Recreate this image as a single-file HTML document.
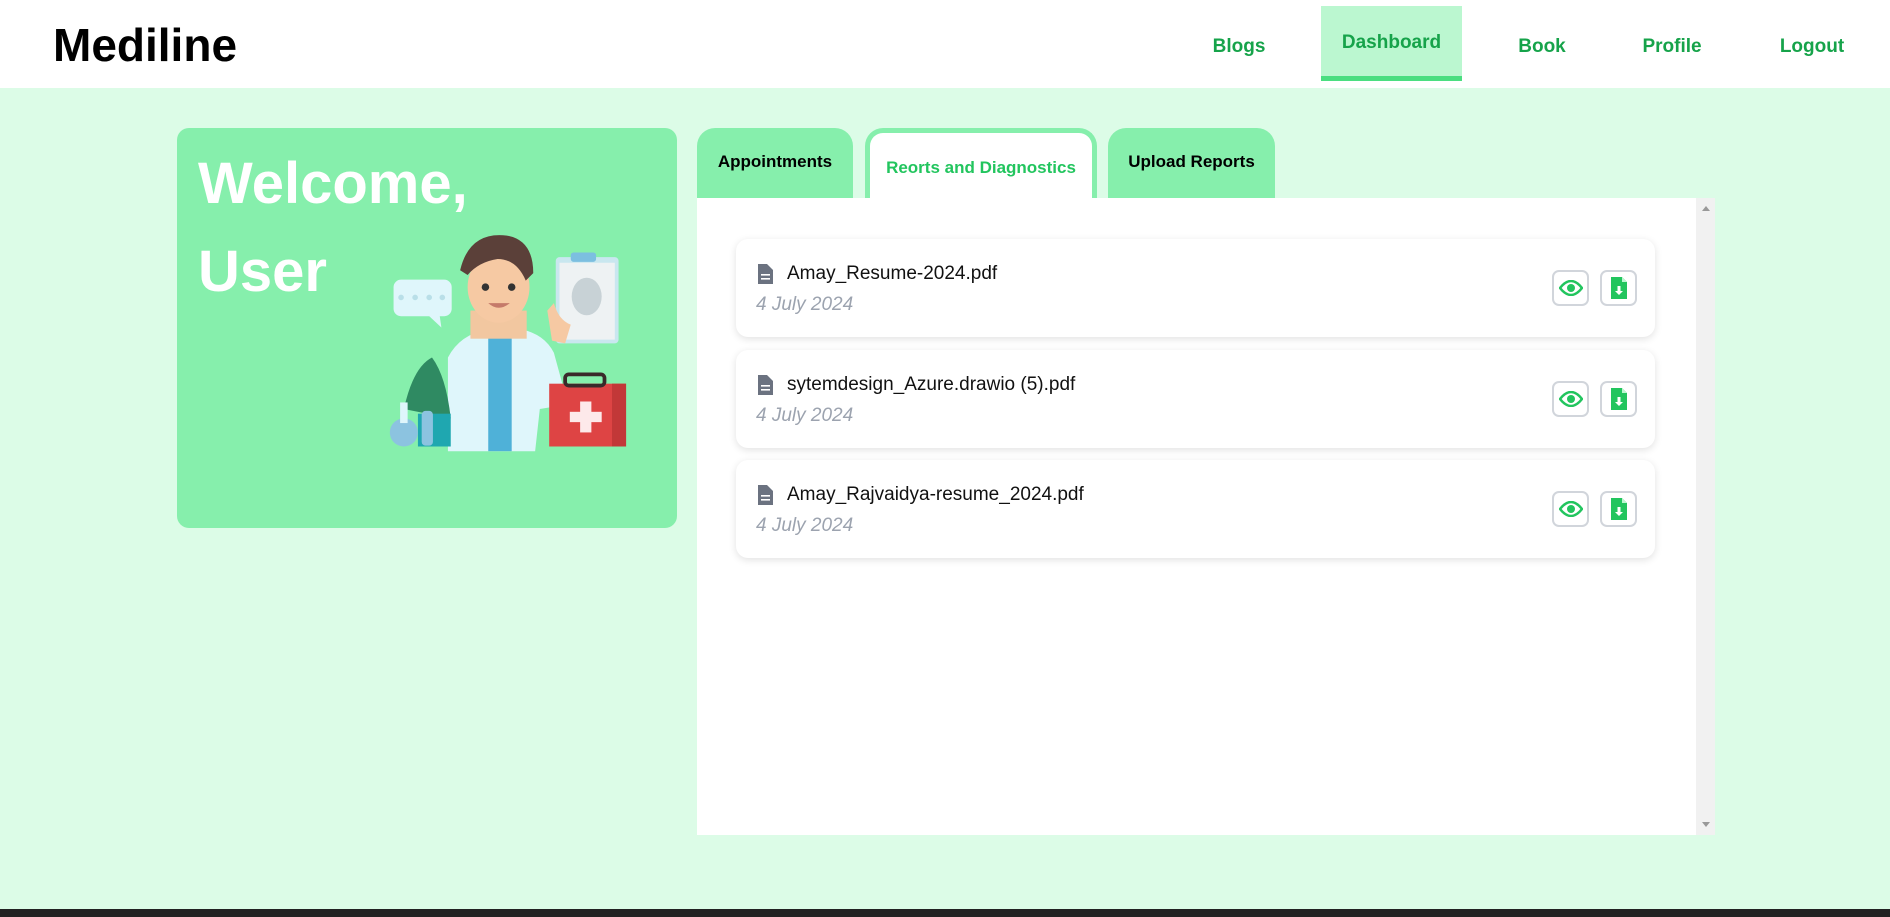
<!DOCTYPE html>
<html><head><meta charset="utf-8"><style>
*{box-sizing:border-box;margin:0;padding:0}
body{width:1890px;height:917px;overflow:hidden;background:#dcfce7;font-family:"Liberation Sans",sans-serif;position:relative}
.nav{position:absolute;left:0;top:0;width:1890px;height:88px;background:#fff}
.logo{position:absolute;left:53px;top:18px;font-size:46px;font-weight:bold;color:#000}
.ni{position:absolute;top:3px;height:88px;line-height:88px;font-size:19px;font-weight:bold;color:#16a34a;transform:translateX(-50%)}
.dash{position:absolute;left:1321px;top:6px;width:141px;height:75px;background:#bbf7d0;border-bottom:5px solid #4ade80;color:#16a34a;font-weight:bold;font-size:19px;text-align:center;line-height:74px}
.welcome{position:absolute;left:177px;top:128px;width:500px;height:400px;background:#86efac;border-radius:12px;overflow:hidden}
.welcome h1{position:absolute;left:21px;color:#fff;font-size:58px;font-weight:bold}
.tab{position:absolute;top:128px;height:70px;background:#86efac;border-radius:18px 18px 0 0;font-size:17px;font-weight:bold;color:#000;text-align:center;line-height:68px}
.panel{position:absolute;left:697px;top:198px;width:1018px;height:637px;background:#fff}
.sb{position:absolute;right:0;top:0;width:19px;height:637px;background:#f1f1f1}
.card{position:absolute;left:39px;width:919px;height:98px;background:#fff;border-radius:12px;box-shadow:0 2px 8px rgba(0,0,0,.12)}
.ttl{position:absolute;left:51px;top:24px;font-size:19px;color:#111}
.dt{position:absolute;left:20px;top:55px;font-size:19px;color:#9ca3af;font-style:italic}
.fi{position:absolute;left:22px;top:25px}
.btn{position:absolute;top:31px;width:37px;height:36px;border:2px solid #d1d5db;border-radius:7px;display:flex;align-items:center;justify-content:center}
</style></head><body>
<div class="nav">
<div class="logo">Mediline</div>
<div class="ni" style="left:1239px">Blogs</div>
<div class="dash">Dashboard</div>
<div class="ni" style="left:1542px">Book</div>
<div class="ni" style="left:1672px">Profile</div>
<div class="ni" style="left:1812px">Logout</div>
</div>
<div class="welcome">
<h1 style="top:22px">Welcome,</h1>
<h1 style="top:110px">User</h1>
<svg style="position:absolute;left:180px;top:83px" width="300" height="246" viewBox="0 0 320 250">
<rect x="39" y="67" width="62" height="39" rx="8" fill="#dff6fb"/><path d="M75 104 L90 118 L88 104Z" fill="#dff6fb"/>
<circle cx="47" cy="86" r="3" fill="#b9dfe8"/><circle cx="62" cy="86" r="3" fill="#b9dfe8"/><circle cx="77" cy="86" r="3" fill="#b9dfe8"/><circle cx="91" cy="86" r="3" fill="#b9dfe8"/>
<rect x="212" y="43" width="67" height="92" rx="4" fill="#c9e7ef"/><rect x="216" y="49" width="59" height="82" fill="#eef2f3"/><rect x="228" y="38" width="27" height="10" rx="3" fill="#7cbfe0"/>
<ellipse cx="245" cy="85" rx="16" ry="20" fill="#c8d2d6"/>
<path d="M97 250 L97 150 Q110 125 140 120 L175 120 Q200 125 210 145 L225 200 L195 205 L190 250Z" fill="#dff6fb"/>
<rect x="140" y="125" width="25" height="125" fill="#4fb1d8"/>
<rect x="121" y="100" width="60" height="30" fill="#f2c7a0"/>
<ellipse cx="151" cy="75" rx="33" ry="38" fill="#f6c9a3"/>
<path d="M110 57 Q120 15 160 20 Q188 25 188 60 L180 68 Q170 45 150 45 Q130 48 118 62Z" fill="#5b4039"/>
<circle cx="137" cy="75" r="4" fill="#333"/><circle cx="165" cy="75" r="4" fill="#333"/>
<path d="M140 92 Q151 102 163 92Z" fill="#c57a6a"/>
<path d="M203 100 L208 132 L222 135 L228 115 Q215 110 210 92Z" fill="#f6c9a3"/>
<rect x="205" y="178" width="82" height="67" fill="#de4444"/><rect x="272" y="178" width="15" height="67" fill="#c23838"/>
<rect x="222" y="168" width="42" height="12" rx="4" fill="none" stroke="#3a2a2a" stroke-width="4"/>
<rect x="238" y="197" width="12" height="33" fill="#fde9ea"/><rect x="227" y="208" width="34" height="11" fill="#fde9ea"/>
<path d="M50 205 Q60 160 80 150 Q95 170 100 215Z" fill="#2f8a62"/>
<rect x="65" y="210" width="35" height="35" fill="#1fa7b0"/>
<circle cx="50" cy="230" r="15" fill="#8cc3e0"/><rect x="46" y="198" width="8" height="22" fill="#dff6fb"/>
<rect x="69" y="207" width="12" height="37" rx="4" fill="#8cc3e0"/>
</svg>
</div>
<div class="tab" style="left:697px;width:156px">Appointments</div>
<div class="tab" style="left:865px;width:232px;background:#fff;border:5px solid #86efac;border-bottom:none;color:#22c55e;line-height:70px">Reorts and Diagnostics</div>
<div class="tab" style="left:1108px;width:167px">Upload Reports</div>
<div class="panel">
<div class="sb"><div style="position:absolute;left:6px;top:8px;border:4px solid transparent;border-bottom:5px solid #999;border-top:none"></div><div style="position:absolute;left:6px;bottom:8px;border:4px solid transparent;border-top:5px solid #999;border-bottom:none"></div></div>
<div class="card" style="top:41px"><svg class="fi" width="15" height="20" viewBox="0 0 15 20"><path d="M0 0H9L15 6V20H0Z" fill="#6b7280"/><rect x="3" y="10" width="9" height="1.6" fill="#fff"/><rect x="3" y="14" width="9" height="1.6" fill="#fff"/></svg><div class="ttl">Amay_Resume-2024.pdf</div><div class="dt">4 July 2024</div>
<div class="btn" style="left:816px"><svg width="24" height="16" viewBox="0 0 24 16"><path d="M1 8Q12-6 23 8Q12 22 1 8Z" fill="none" stroke="#22c55e" stroke-width="2.5"/><circle cx="12" cy="8" r="4" fill="#22c55e"/></svg></div>
<div class="btn" style="left:864px"><svg width="16" height="22" viewBox="0 0 16 22"><path d="M0 0H11L16 5V22H0Z" fill="#22c55e"/><path d="M11 0V5H16Z" fill="#bbf7d0"/><path d="M6.5 9H9.5V14H12L8 18L4 14H6.5Z" fill="#fff"/></svg></div></div>
<div class="card" style="top:152px"><svg class="fi" width="15" height="20" viewBox="0 0 15 20"><path d="M0 0H9L15 6V20H0Z" fill="#6b7280"/><rect x="3" y="10" width="9" height="1.6" fill="#fff"/><rect x="3" y="14" width="9" height="1.6" fill="#fff"/></svg><div class="ttl">sytemdesign_Azure.drawio (5).pdf</div><div class="dt">4 July 2024</div>
<div class="btn" style="left:816px"><svg width="24" height="16" viewBox="0 0 24 16"><path d="M1 8Q12-6 23 8Q12 22 1 8Z" fill="none" stroke="#22c55e" stroke-width="2.5"/><circle cx="12" cy="8" r="4" fill="#22c55e"/></svg></div>
<div class="btn" style="left:864px"><svg width="16" height="22" viewBox="0 0 16 22"><path d="M0 0H11L16 5V22H0Z" fill="#22c55e"/><path d="M11 0V5H16Z" fill="#bbf7d0"/><path d="M6.5 9H9.5V14H12L8 18L4 14H6.5Z" fill="#fff"/></svg></div></div>
<div class="card" style="top:262px"><svg class="fi" width="15" height="20" viewBox="0 0 15 20"><path d="M0 0H9L15 6V20H0Z" fill="#6b7280"/><rect x="3" y="10" width="9" height="1.6" fill="#fff"/><rect x="3" y="14" width="9" height="1.6" fill="#fff"/></svg><div class="ttl">Amay_Rajvaidya-resume_2024.pdf</div><div class="dt">4 July 2024</div>
<div class="btn" style="left:816px"><svg width="24" height="16" viewBox="0 0 24 16"><path d="M1 8Q12-6 23 8Q12 22 1 8Z" fill="none" stroke="#22c55e" stroke-width="2.5"/><circle cx="12" cy="8" r="4" fill="#22c55e"/></svg></div>
<div class="btn" style="left:864px"><svg width="16" height="22" viewBox="0 0 16 22"><path d="M0 0H11L16 5V22H0Z" fill="#22c55e"/><path d="M11 0V5H16Z" fill="#bbf7d0"/><path d="M6.5 9H9.5V14H12L8 18L4 14H6.5Z" fill="#fff"/></svg></div></div>
</div>
<div style="position:absolute;left:0;top:909px;width:1890px;height:8px;background:#222"></div>
</body></html>
